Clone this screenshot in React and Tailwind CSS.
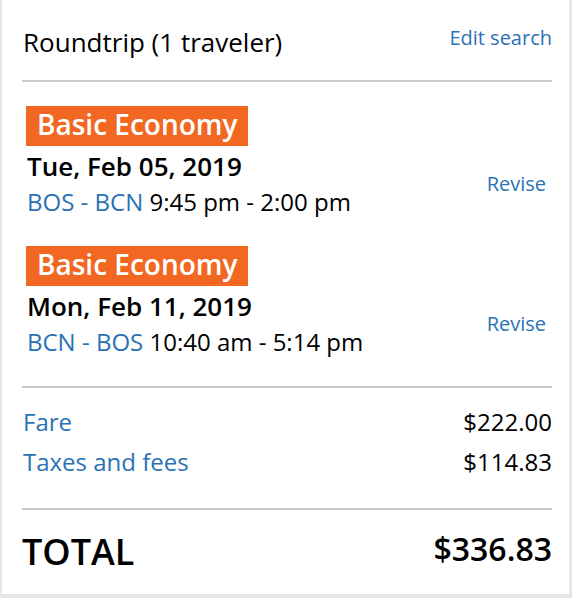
import React from "react";

const font = { fontFamily: '"Open Sans", "Noto Sans", sans-serif' };

function Segment({ date, route, times, first }) {
  return (
    <div className={first ? "mt-[24px]" : "mt-[26px]"}>
      <div className="flex">
        <div className="ml-[1px] h-[40px] bg-[#f26722] pl-[11px] pr-[10px] text-[28px] leading-[36px] font-semibold text-white">
          Basic Economy
        </div>
      </div>
      <div className="mt-[2px] flex items-center justify-between">
        <div className="pl-[2px]">
          <div className="text-[26px] leading-[36px] font-semibold text-black">{date}</div>
          <div className="text-[24px] leading-[36px] text-black">
            <span className="text-[#2a72b5]">{route}</span> {times}
          </div>
        </div>
        <div className="text-[20px] leading-[28px] text-[#2a72b5] pr-[6px]">Revise</div>
      </div>
    </div>
  );
}

export default function App() {
  return (
    <div className="w-[572px] h-[598px] bg-[#e6e6e6] pl-[2px]" style={font}>
      <div className="w-[567px] h-[594px] bg-white pl-[20px] pr-[17px]">
        <div className="pt-[25px] flex items-start justify-between">
          <div className="pl-[1px] text-[26px] leading-[34px] text-black">Roundtrip (1 traveler)</div>
          <div className="-mt-[1px] text-[20px] leading-[28px] text-[#2a72b5]">Edit search</div>
        </div>
        <div className="mt-[21px] h-[2px] bg-[#cccccc]" />
        <div className="pl-[3px]">
          <Segment first date="Tue, Feb 05, 2019" route="BOS - BCN" times="9:45 pm - 2:00 pm" />
          <Segment date="Mon, Feb 11, 2019" route="BCN - BOS" times="10:40 am - 5:14 pm" />
        </div>
        <div className="mt-[26px] h-[2px] bg-[#cccccc]" />
        <div className="mt-[16px] flex justify-between text-[24px] leading-[36px]">
          <span className="pl-[1px] text-[#2a72b5]">Fare</span>
          <span className="text-black">$222.00</span>
        </div>
        <div className="mt-[4px] flex justify-between text-[24px] leading-[36px]">
          <span className="pl-[1px] text-[#2a72b5]">Taxes and fees</span>
          <span className="text-black">$114.83</span>
        </div>
        <div className="mt-[28px] h-[2px] bg-[#cccccc]" />
        <div className="mt-[20px] flex items-start justify-between">
          <span className="text-[36px] leading-[44px] font-semibold text-black">TOTAL</span>
          <span className="-mt-[3px] text-[32px] leading-[44px] font-semibold text-black">$336.83</span>
        </div>
      </div>
    </div>
  );
}
